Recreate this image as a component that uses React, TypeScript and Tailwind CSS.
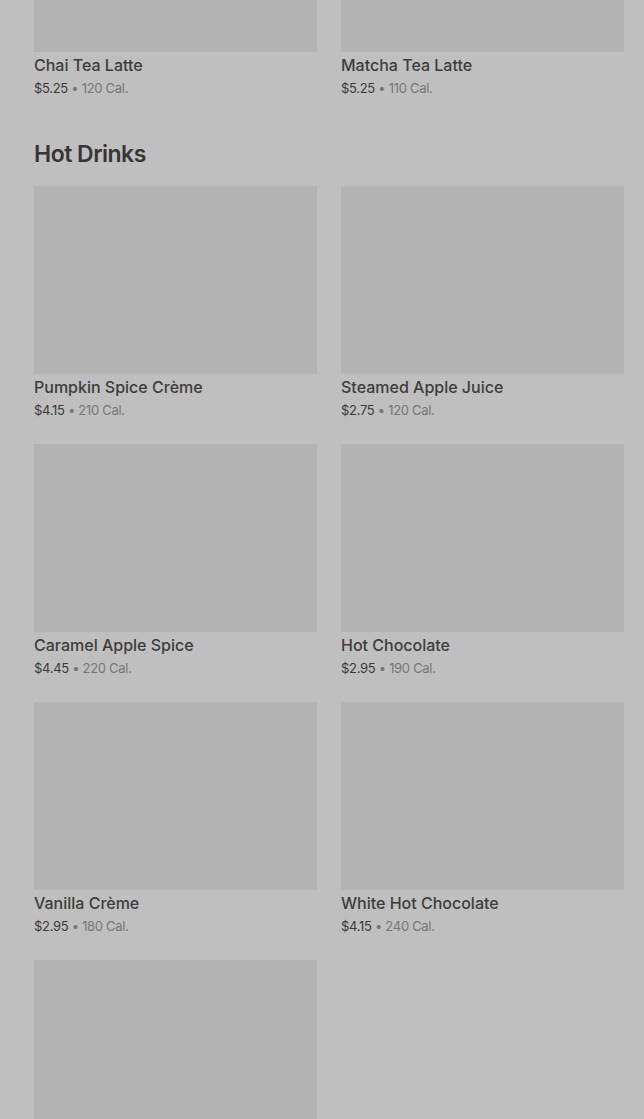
import React from "react";

type Item = { name: string; price: string; cal: string };

const top: Item[] = [
  { name: "Chai Tea Latte", price: "$5.25", cal: "120 Cal." },
  { name: "Matcha Tea Latte", price: "$5.25", cal: "110 Cal." },
];

const hot: Item[] = [
  { name: "Pumpkin Spice Crème", price: "$4.15", cal: "210 Cal." },
  { name: "Steamed Apple Juice", price: "$2.75", cal: "120 Cal." },
  { name: "Caramel Apple Spice", price: "$4.45", cal: "220 Cal." },
  { name: "Hot Chocolate", price: "$2.95", cal: "190 Cal." },
  { name: "Vanilla Crème", price: "$2.95", cal: "180 Cal." },
  { name: "White Hot Chocolate", price: "$4.15", cal: "240 Cal." },
  { name: "", price: "", cal: "" },
];

function Card({ item, imgClass }: { item: Item; imgClass: string }) {
  return (
    <div className="flex flex-col">
      <div className={`${imgClass} w-full bg-[#b3b3b3]`} />
      {item.name && (
        <div className="pt-[3px]">
          <div className="text-[16px] leading-[20px] font-medium text-[#3d3d3d]">{item.name}</div>
          <div className="mt-[3px] text-[13px] leading-[20px] tracking-[-0.3px] font-normal">
            <span className="text-[#3a3a3a]">{item.price}</span>
            <span className="text-[#767676]"> • {item.cal}</span>
          </div>
        </div>
      )}
    </div>
  );
}

export default function App() {
  return (
    <div
      className="min-h-[1119px] h-[1119px] overflow-hidden bg-[#bfbfbf] pl-[34px] pr-[20px]"
      style={{ fontFamily: "Inter, 'Liberation Sans', sans-serif" }}
    >
      <div className="grid grid-cols-2 gap-x-6">
        {top.map((it) => (
          <Card key={it.name} item={it} imgClass="h-[52px]" />
        ))}
      </div>
      <h2 className="mt-[40px] mb-[16px] text-[23px] leading-[32px] font-semibold tracking-[-0.5px] text-[#363636]">
        Hot Drinks
      </h2>
      <div className="grid grid-cols-2 gap-x-6 gap-y-6">
        {hot.map((it, i) => (
          <Card key={i} item={it} imgClass="h-[188px]" />
        ))}
      </div>
    </div>
  );
}
